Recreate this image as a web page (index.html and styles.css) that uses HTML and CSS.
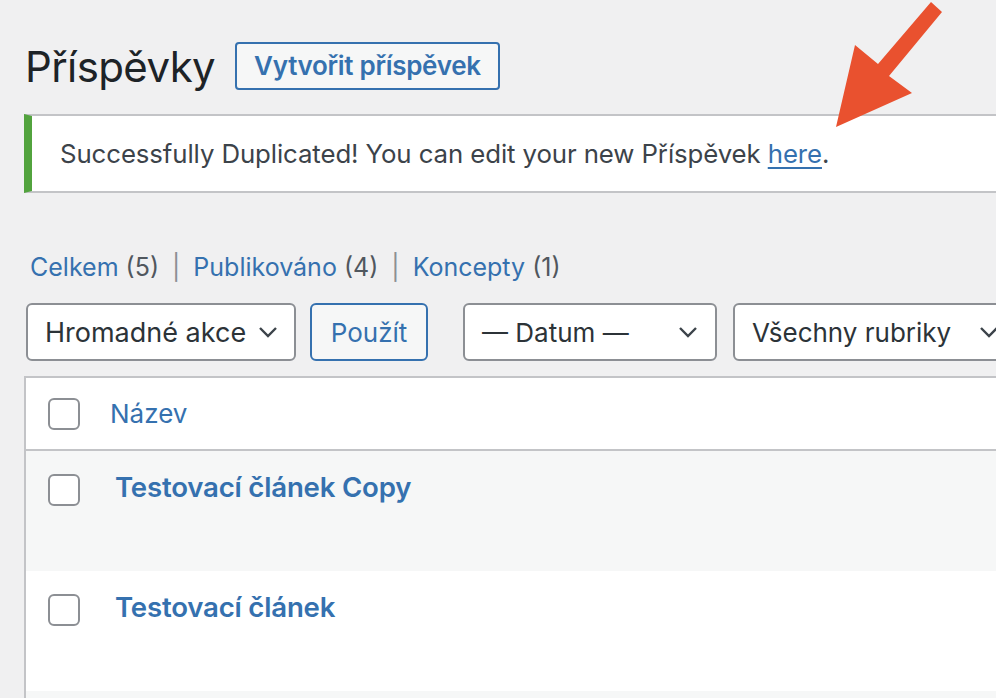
FILE: index.html
```html
<!DOCTYPE html>
<html lang="cs">
<head>
    <meta charset="UTF-8">
    <meta name="viewport" content="width=device-width, initial-scale=1.0">
    <title>Příspěvky</title>
    <link rel="stylesheet" href="styles.css">
</head>
<body>
    <div class="wrap">
        <div class="page-head">
            <h1>Příspěvky</h1>
            <a class="title-action" href="#">Vytvořit příspěvek</a>
        </div>

        <div class="notice">
            <p>Successfully Duplicated! You can edit your new Příspěvek <a href="#">here</a>.</p>
        </div>

        <ul class="subsubsub">
            <li><a href="#">Celkem</a> <span class="count">(5)</span></li>
            <li class="sep">|</li>
            <li><a href="#">Publikováno</a> <span class="count">(4)</span></li>
            <li class="sep">|</li>
            <li><a href="#">Koncepty</a> <span class="count">(1)</span></li>
        </ul>

        <div class="tablenav">
            <div class="select select-bulk">
                <span>Hromadné akce</span>
                <svg width="20" height="12" viewBox="0 0 20 12"><path d="M2 2 L10 10 L18 2" fill="none" stroke="#3c434a" stroke-width="2.4"/></svg>
            </div>
            <button class="btn-apply">Použít</button>
            <div class="select select-date">
                <span>— Datum —</span>
                <svg width="20" height="12" viewBox="0 0 20 12"><path d="M2 2 L10 10 L18 2" fill="none" stroke="#3c434a" stroke-width="2.4"/></svg>
            </div>
            <div class="select select-cat">
                <span>Všechny rubriky</span>
                <svg width="20" height="12" viewBox="0 0 20 12"><path d="M2 2 L10 10 L18 2" fill="none" stroke="#3c434a" stroke-width="2.4"/></svg>
            </div>
        </div>

        <div class="posts">
            <div class="row row-head">
                <span class="check"></span>
                <a class="col-title" href="#">Název</a>
            </div>
            <div class="row alt">
                <span class="check"></span>
                <a class="post-title" href="#">Testovací článek Copy</a>
            </div>
            <div class="row">
                <span class="check"></span>
                <a class="post-title" href="#">Testovací článek</a>
            </div>
            <div class="row alt"></div>
        </div>
    </div>

    <svg class="arrow" width="996" height="140" viewBox="0 0 996 140">
        <polygon points="931,2 942,12 889,76 912,93 836,127 855,45 878,64" fill="#e9512f"/>
    </svg>
</body>
</html>
```

FILE: styles.css
```css
body {
    margin: 0;
    background: #f0f0f1;
    font-family: Inter, "Noto Sans", sans-serif;
    color: #3c434a;
    overflow: hidden;
    position: relative;
    height: 698px;
}

a {
    color: #3571af;
    text-decoration: none;
}

.wrap {
    width: 1120px;
    padding-left: 24px;
}

.page-head {
    display: flex;
    align-items: center;
    padding-top: 42px;
    height: 48px;
}

.page-head h1 {
    margin: 0 20px 0 1px;
    font-size: 42px;
    font-weight: 400;
    color: #1d2327;
    letter-spacing: -0.6px;
}

.title-action {
    box-sizing: border-box;
    height: 48px;
    padding: 0 17px;
    border: 2px solid #3571af;
    border-radius: 4px;
    background: #f6f7f7;
    font-size: 26px;
    font-weight: 600;
    line-height: 44px;
    letter-spacing: -0.3px;
}

.notice {
    margin-top: 24px;
    background: #fff;
    border: 2px solid #c3c4c7;
    border-left: 8px solid #52a33e;
    height: 75px;
    display: flex;
    align-items: center;
    padding-left: 28px;
}

.notice p {
    margin: 0;
    font-size: 25.8px;
    letter-spacing: -0.1px;
    color: #3c434a;
}

.notice p a {
    text-decoration: underline;
    text-underline-offset: 4px;
}

.subsubsub {
    list-style: none;
    display: flex;
    margin: 54px 0 0;
    padding: 0 0 0 6px;
    font-size: 25px;
    height: 40px;
    align-items: center;
    gap: 8px;
}

.subsubsub .count {
    color: #50575e;
}

.subsubsub .sep {
    color: #8c8f94;
    padding: 0 5px;
}

.tablenav {
    display: flex;
    align-items: center;
    margin-top: 16px;
    height: 58px;
    padding-left: 2px;
}

.select {
    box-sizing: border-box;
    height: 58px;
    background: #fff;
    border: 2px solid #8c8f94;
    border-radius: 6px;
    display: flex;
    align-items: center;
    justify-content: space-between;
    padding: 0 16px 0 17px;
    font-size: 26px;
    color: #2c3338;
}

.select-bulk {
    width: 270px;
}

.select-bulk span {
    font-size: 27px;
}

.select-date {
    width: 254px;
    margin-left: 35px;
    padding-right: 17px;
}

.select-cat {
    width: 284px;
    margin-left: 16px;
}

.btn-apply {
    box-sizing: border-box;
    height: 58px;
    width: 118px;
    margin-left: 14px;
    border: 2px solid #3571af;
    border-radius: 6px;
    background: #f6f7f7;
    color: #3571af;
    font-family: inherit;
    font-size: 26px;
}

.posts {
    margin-top: 15px;
    background: #fff;
    border-top: 2px solid #c3c4c7;
    border-left: 2px solid #c3c4c7;
}

.row {
    display: flex;
    align-items: flex-start;
    height: 120px;
    padding-left: 22px;
    box-sizing: border-box;
    padding-top: 23px;
}

.row.alt {
    background: #f6f7f7;
}

.row-head {
    height: 73px;
    align-items: center;
    padding-top: 0;
    border-bottom: 2px solid #c3c4c7;
}

.check {
    box-sizing: border-box;
    width: 32px;
    height: 32px;
    border: 2px solid #8c8f94;
    border-radius: 6px;
    background: #fff;
    flex-shrink: 0;
}

.col-title {
    margin-left: 30px;
    font-size: 26px;
}

.post-title {
    margin-left: 35px;
    margin-top: -4px;
    font-size: 27.6px;
    font-weight: 600;
    letter-spacing: -0.2px;
}

.arrow {
    position: absolute;
    top: 0;
    left: 0;
}
```
